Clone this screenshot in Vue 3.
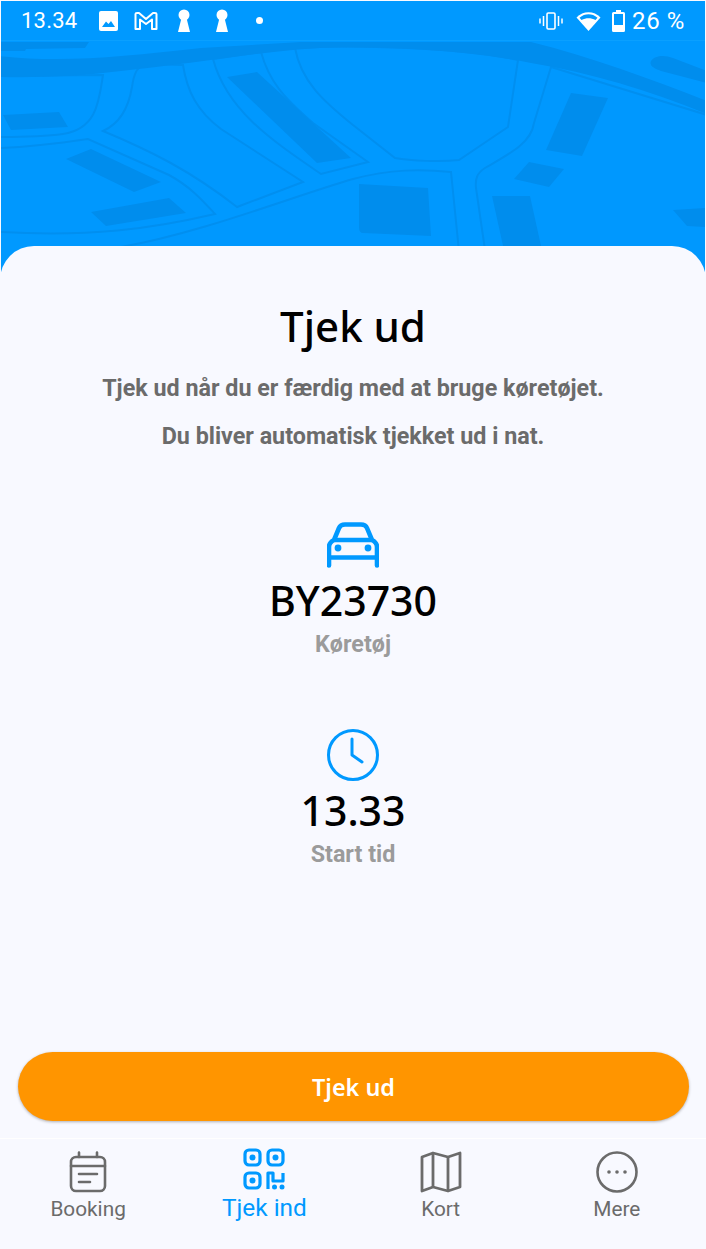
<template>
  <div class="screen">
    <div class="hero">
      <!-- kort baggrund -->
      <svg class="map" viewBox="0 0 704 285" preserveAspectRatio="none">
        <g class="blocks">
          <path d="M-2 75 L102 74 C98 100 96 128 62 133 C40 136 20 136 -2 136 Z" />
          <path d="M144 63 L182 64 C186 90 196 110 220 128 L302 181 L236 206 C190 170 150 150 102 130 C120 122 128 104 131 86 C133 72 136 66 144 63 Z" />
          <path d="M212 58 L260 51 C268 80 282 96 312 122 L367 161 L320 173 C272 140 226 110 212 58 Z" />
          <path d="M294 47 C350 44 460 46 517 59 L507 126 L458 159 C440 161 410 160 394 157 L352 124 C322 100 300 80 294 47 Z" />
          <path d="M-2 147 C30 146 60 142 87 138 L168 174 C190 186 202 200 214 213 C150 228 90 236 -2 231 Z" />
          <path d="M120 246 C200 232 290 196 352 178 C390 168 420 168 450 171 L462 290 L100 290 Z" />
          <path d="M550 66 L706 114 L706 290 L490 290 L475 187 C474 178 476 172 484 167 C510 152 530 142 533 122 Z" />
        </g>
        <g class="dark">
          <path d="M-2 55 C60 62 120 56 200 47 L300 41 L530 41 C590 56 650 78 706 100 L706 113 C650 90 590 72 530 62 C470 50 400 46 340 46 C270 48 200 62 120 70 C80 75 40 77 -2 76 Z" />
          <path d="M-2 41 L88 41 L84 47 L25 48 L24 50 L-2 50 Z" />
          <path d="M650 60 C654 54 664 54 672 57 L706 70 L706 82 L660 70 C652 67 648 64 650 60 Z" />
          <path d="M2 114 L58 111 L67 126 L10 129 Z" />
          <path d="M65 158 L90 148 L160 181 L133 191 Z" />
          <path d="M90 211 L168 197 L185 212 L105 225 Z" />
          <path d="M226 76 L256 71 L350 157 L316 162 Z" />
          <path d="M358 183 L427 187 L430 235 L362 232 Q358 232 358 226 Z" />
          <path d="M570 92 L607 97 L581 155 L545 149 Z" />
          <path d="M528 161 L563 168 L548 186 L513 178 Z" />
          <path d="M491 195 L529 195 L550 290 L512 290 Z" />
          <path d="M672 209 L706 207 L706 226 L686 225 Z" />
        </g>
      </svg>

      <div class="status-bar">
        <span class="time">13.34</span>
        <svg class="st-img" width="19" height="20" viewBox="0 0 19 20">
          <rect width="19" height="20" rx="2" fill="#fff" />
          <path d="M3 16 L7 10.5 L9.5 13 L12 10 L16 16 Z" fill="#0099ff" />
        </svg>
        <svg class="st-gmail" width="24" height="18" viewBox="0 0 24 18" fill="none" stroke="#fff" stroke-width="2" stroke-linejoin="round">
          <path d="M1.5 2 Q1.5 1 3 1 L5 1 L12 7 L19 1 L21 1 Q22.500 1 22.500 2 L22.500 17 L18 17 L18 7.500 L12 12 L6 7.500 L6 17 L1.500 17 Z" />
        </svg>
        <svg class="st-key" width="14" height="23" viewBox="0 0 14 23">
          <circle cx="7" cy="6" r="5.500" fill="#fff" />
          <path d="M4.500 9 L9.500 9 L13 23 L1 23 Z" fill="#fff" />
        </svg>
        <svg class="st-key2" width="14" height="23" viewBox="0 0 14 23">
          <circle cx="7" cy="6" r="5.500" fill="#fff" />
          <path d="M4.500 9 L9.500 9 L13 23 L1 23 Z" fill="#fff" />
        </svg>
        <span class="st-dot"></span>
        <span class="spacer"></span>
        <svg class="st-vib" width="24" height="18" viewBox="0 0 24 18" fill="none" stroke="#fff">
          <rect x="8" y="1" width="8" height="16" rx="1.200" stroke-width="1.600" />
          <path d="M4.500 4 V14 M19.500 4 V14" stroke-width="1.500" />
          <path d="M1 6.500 V11.500 M23 6.500 V11.500" stroke-width="1.500" />
        </svg>
        <svg class="st-wifi" width="25" height="21" viewBox="0 0 25 21">
          <path d="M0.500 7.500 C7 0.500 18 0.500 24.500 7.500 L12.500 21 Z" fill="#fff" />
          <path d="M3.500 7.800 C9 3.200 16 3.200 21.500 7.800 L19.500 10 C15 7.500 10 7.500 5.500 10 Z" fill="#0099ff" />
        </svg>
        <svg class="st-batt" width="13" height="22" viewBox="0 0 13 22">
          <path d="M4 0 H9 V2 H11.500 Q13 2 13 3.500 V20.500 Q13 22 11.500 22 H1.500 Q0 22 0 20.500 V3.500 Q0 2 1.500 2 H4 Z" fill="#fff" />
          <rect x="2" y="4" width="9" height="11" fill="#0099ff" />
        </svg>
        <span class="pct">26 %</span>
      </div>
    </div>

    <main class="card">
      <h1 class="title">Tjek ud</h1>
      <p class="lead">Tjek ud når du er færdig med at bruge køretøjet.</p>
      <p class="lead second">Du bliver automatisk tjekket ud i nat.</p>

      <section class="info car">
        <svg width="52" height="46" viewBox="1 0 52 46" fill="none" stroke="#0099ff" stroke-width="4.600" stroke-linejoin="round" stroke-linecap="round">
          <path d="M3 25 C3 21 6 19 8 18 L13 6 C14 3.500 16 2.500 19 2.500 H35 C38 2.500 40 3.500 41 6 L46 18 C48 19 51 21 51 25 V43.500 M3 43.500 V25" />
          <path d="M9 18 H45" />
          <path d="M3 35.500 H51" />
          <circle cx="12" cy="26" r="3.400" fill="#0099ff" stroke="none" />
          <circle cx="42" cy="26" r="3.400" fill="#0099ff" stroke="none" />
        </svg>
        <div class="value car-value">BY23730</div>
        <div class="label">Køretøj</div>
      </section>

      <section class="info clock">
        <svg width="54" height="54" viewBox="0 0 54 54" fill="none" stroke="#0099ff" stroke-linecap="round" stroke-linejoin="round">
          <circle cx="27" cy="27" r="24.500" stroke-width="3" />
          <path d="M26 11 V27 L36 34" stroke-width="3" />
        </svg>
        <div class="value clock-value">13.33</div>
        <div class="label">Start tid</div>
      </section>

      <button class="checkout">Tjek ud</button>
    </main>

    <nav class="tabs">
      <div v-for="tab in tabs" :key="tab.name" class="tab" :class="{ active: tab.active }">
        <svg v-if="tab.icon === 'booking'" width="40" height="42" viewBox="0 0 40 42" fill="none" stroke="currentColor" stroke-width="2.600" stroke-linecap="round">
          <rect x="3" y="6" width="34" height="34" rx="5" />
          <path d="M3 15 H37 M11 1.500 V6 M29 1.500 V6 M11 23 H29 M11 31 H22" />
        </svg>
        <svg v-else-if="tab.icon === 'qr'" width="42" height="42" viewBox="0 0 42 42" fill="none" stroke="currentColor" stroke-width="3.200" stroke-linejoin="round">
          <rect x="2" y="2" width="15" height="15" rx="4" />
          <rect x="25" y="2" width="15" height="15" rx="4" />
          <rect x="2" y="25" width="15" height="15" rx="4" />
          <path d="M25 41 V25 H30 V33 H40 V25" />
          <g fill="currentColor" stroke="none">
            <circle cx="9.500" cy="9.500" r="3" />
            <circle cx="32.500" cy="9.500" r="3" />
            <circle cx="9.500" cy="32.500" r="3" />
            <circle cx="31.500" cy="39" r="2.500" />
            <circle cx="39" cy="39" r="2.500" />
          </g>
        </svg>
        <svg v-else-if="tab.icon === 'map'" width="42" height="42" viewBox="0 0 42 42" fill="none" stroke="currentColor" stroke-width="2.800" stroke-linejoin="round">
          <path d="M2 6 L13 2 L28 6 L40 2 V36 L28 40 L13 36 L2 40 Z" />
          <path d="M13 2 V36 M28 6 V40" />
        </svg>
        <svg v-else width="42" height="42" viewBox="0 0 42 42" fill="none" stroke="currentColor" stroke-width="2.600">
          <circle cx="21" cy="21" r="19.500" />
          <g fill="currentColor" stroke="none">
            <circle cx="13" cy="21" r="1.800" />
            <circle cx="21" cy="21" r="1.800" />
            <circle cx="29" cy="21" r="1.800" />
          </g>
        </svg>
        <span class="tab-label">{{ tab.name }}</span>
      </div>
    </nav>
  </div>
</template>

<script setup>
const tabs = [
  { name: 'Booking', icon: 'booking' },
  { name: 'Tjek ind', icon: 'qr', active: true },
  { name: 'Kort', icon: 'map' },
  { name: 'Mere', icon: 'more' }
]
</script>

<style scoped>
.screen {
  width: 706px;
  height: 1249px;
  display: flex;
  flex-direction: column;
  background: #f8f9ff;
  overflow: hidden;
}

.hero {
  position: relative;
  height: 285px;
  margin: 1px 1px 0;
  background: #0099ff;
  flex-shrink: 0;
}

.map {
  position: absolute;
  left: 0;
  top: 0;
  width: 704px;
  height: 285px;
}

.blocks path {
  fill: #0098fe;
  stroke: #008ff0;
  stroke-width: 2;
}

.dark path {
  fill: #008ded;
}

.status-bar {
  position: relative;
  height: 39px;
  display: flex;
  align-items: center;
  background: #0099ff;
  color: #fff;
  font-family: Roboto, "Liberation Sans", sans-serif;
  border-bottom: 1px solid #0aa0ff;
  box-sizing: content-box;
}

.time {
  margin-left: 20px;
  font-size: 22px;
  letter-spacing: 0.2px;
}

.st-img { margin-left: 22px; }
.st-gmail { margin-left: 16px; }
.st-key { margin-left: 19px; }
.st-key2 { margin-left: 24px; }

.st-dot {
  width: 7px;
  height: 7px;
  margin-left: 27px;
  border-radius: 50%;
  background: #fff;
}

.spacer { flex: 1; }
.st-vib { margin-right: 13px; }
.st-wifi { margin-right: 11px; }
.st-batt { margin-right: 7px; }

.pct {
  margin-right: 20px;
  font-size: 24px;
  letter-spacing: 0.6px;
}

.card {
  flex: 1;
  margin-top: -40px;
  position: relative;
  display: flex;
  flex-direction: column;
  align-items: center;
  background: #f8f9ff;
  border-radius: 34px 34px 0 0;
  padding: 0 18px 17px;
  min-height: 0;
}

.title {
  margin: 53px 0 0;
  font-family: "Noto Sans", sans-serif;
  font-size: 42px;
  font-weight: 500;
  line-height: 54px;
  color: #000;
}

.lead {
  margin: 21px 0 0;
  font-family: Roboto, "Liberation Sans", sans-serif;
  font-size: 23.300px;
  font-weight: 700;
  line-height: 28px;
  color: #6b6b6b;
}

.lead.second {
  margin-top: 20px;
}

.info {
  display: flex;
  flex-direction: column;
  align-items: center;
}

.car { margin-top: 72px; }
.clock { margin-top: 70px; }

.value {
  font-family: "Noto Sans", sans-serif;
  font-size: 41px;
  font-weight: 500;
  line-height: 54px;
  color: #000;
}

.car-value { margin-top: 5px; }
.clock-value { margin-top: 1px; }

.label {
  margin-top: 3px;
  font-family: Roboto, "Liberation Sans", sans-serif;
  font-size: 23.300px;
  font-weight: 700;
  line-height: 28px;
  color: #9b9b9b;
}

.checkout {
  margin-top: auto;
  align-self: flex-start;
  width: 671px;
  height: 69px;
  border: none;
  border-radius: 35px;
  background: #ff9500;
  box-shadow: 0 1px 3px rgba(0, 0, 0, 0.3);
  color: #fff;
  font-family: "Noto Sans", sans-serif;
  font-size: 23.400px;
  font-weight: 600;
}

.tabs {
  height: 111px;
  flex-shrink: 0;
  display: grid;
  grid-template-columns: repeat(4, 1fr);
  padding-right: 1px;
  border-top: 1px solid #fff;
  background: #f8f9ff;
  box-sizing: border-box;
}

.tab {
  display: flex;
  flex-direction: column;
  align-items: center;
  padding-top: 12px;
  color: #6b6b6b;
  font-family: Roboto, "Liberation Sans", sans-serif;
  font-size: 20.800px;
}

.tab.active {
  padding-top: 9px;
  color: #0099ff;
  font-size: 24.400px;
}

.tab-label {
  line-height: 28px;
  margin-top: 2px;
}

.tab.active .tab-label {
  margin-top: 4px;
}
</style>
